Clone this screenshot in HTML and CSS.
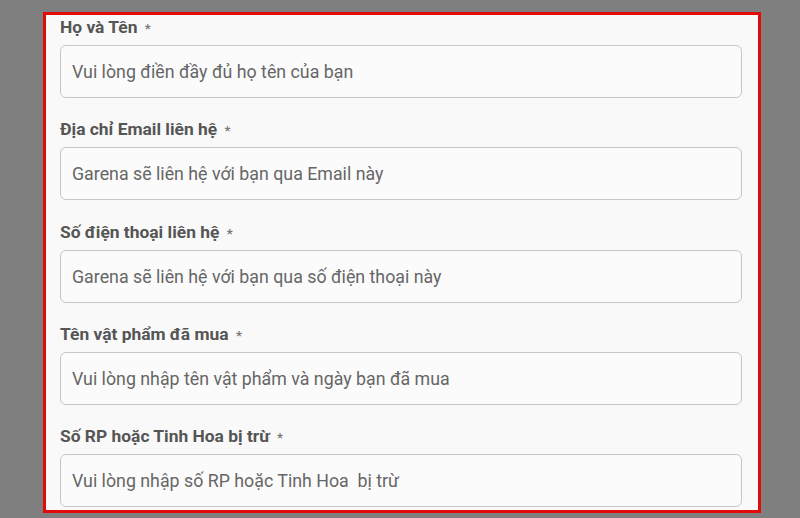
FILE: index.html
```html
<!DOCTYPE html>
<html lang="vi">
<head>
<meta charset="utf-8">
<link rel="stylesheet" href="styles.css">
</head>
<body>
<form class="frame">
  <div class="field">
    <label class="label">Họ và Tên <span class="req">*</span></label>
    <div class="input">Vui lòng điền đầy đủ họ tên của bạn</div>
  </div>
  <div class="field">
    <label class="label">Địa chỉ Email liên hệ <span class="req">*</span></label>
    <div class="input">Garena sẽ liên hệ với bạn qua Email này</div>
  </div>
  <div class="field">
    <label class="label">Số điện thoại liên hệ <span class="req">*</span></label>
    <div class="input">Garena sẽ liên hệ với bạn qua số điện thoại này</div>
  </div>
  <div class="field">
    <label class="label">Tên vật phẩm đã mua <span class="req">*</span></label>
    <div class="input">Vui lòng nhập tên vật phẩm và ngày bạn đã mua</div>
  </div>
  <div class="field">
    <label class="label">Số RP hoặc Tinh Hoa bị trừ <span class="req">*</span></label>
    <div class="input">Vui lòng nhập số RP hoặc Tinh Hoa&nbsp; bị trừ</div>
  </div>
</form>
</body>
</html>
```

FILE: styles.css
```css
html, body {
  margin: 0;
  padding: 0;
}
body {
  background: #7f7f7f;
  width: 800px;
  height: 518px;
  overflow: hidden;
  font-family: Roboto, "Noto Sans", sans-serif;
}
.frame {
  box-sizing: border-box;
  margin: 12px 0 0 43px;
  width: 718px;
  height: 501px;
  border: 3px solid #e10b0b;
  background: #f9f9f9;
  padding: 0 16px 0 14px;
  display: flex;
  flex-direction: column;
  gap: 19.25px;
}
.field {
  display: flex;
  flex-direction: column;
  gap: 6px;
}
.label {
  font-size: 17.4px;
  line-height: 24px;
  height: 24px;
  font-weight: 700;
  color: #555555;
}
.req {
  font-size: 13px;
  color: #777777;
  font-weight: 700;
  margin-left: 3px;
}
.input {
  box-sizing: border-box;
  width: 682px;
  height: 53px;
  border: 1px solid #c6c6c6;
  border-radius: 6px;
  background: #fbfbfb;
  padding: 0 11px;
  display: flex;
  align-items: center;
  font-size: 17.8px;
  color: #666666;
}
```
